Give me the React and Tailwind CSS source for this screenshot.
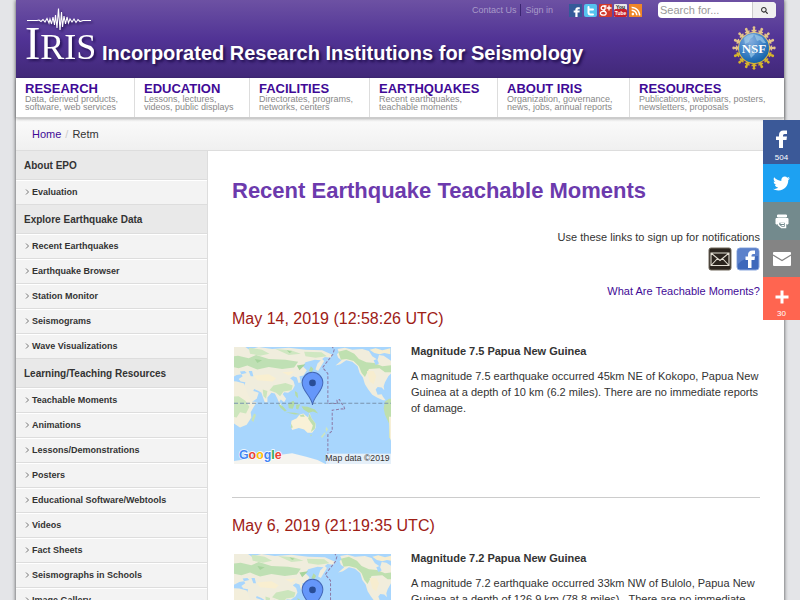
import React from 'react';
import { FaRss, FaSearch, FaTwitter } from 'react-icons/fa';

const navItems = [
  { title: 'RESEARCH', lines: ['Data, derived products,', 'software, web services'] },
  { title: 'EDUCATION', lines: ['Lessons, lectures,', 'videos, public displays'] },
  { title: 'FACILITIES', lines: ['Directorates, programs,', 'networks, centers'] },
  { title: 'EARTHQUAKES', lines: ['Recent earthquakes,', 'teachable moments'] },
  { title: 'ABOUT IRIS', lines: ['Organization, governance,', 'news, jobs, annual reports'] },
  { title: 'RESOURCES', lines: ['Publications, webinars, posters,', 'newsletters, proposals'] },
];

const sidebarSections = [
  { title: 'About EPO', links: ['Evaluation'] },
  {
    title: 'Explore Earthquake Data',
    links: ['Recent Earthquakes', 'Earthquake Browser', 'Station Monitor', 'Seismograms', 'Wave Visualizations'],
  },
  {
    title: 'Learning/Teaching Resources',
    links: [
      'Teachable Moments',
      'Animations',
      'Lessons/Demonstrations',
      'Posters',
      'Educational Software/Webtools',
      'Videos',
      'Fact Sheets',
      'Seismographs in Schools',
      'Image Gallery',
    ],
  },
];

const moments = [
  {
    date: 'May 14, 2019 (12:58:26 UTC)',
    title: 'Magnitude 7.5 Papua New Guinea',
    text: 'A magnitude 7.5 earthquake occurred 45km NE of Kokopo, Papua New Guinea at a depth of 10 km (6.2 miles). There are no immediate reports of damage.',
    shift: 0,
  },
  {
    date: 'May 6, 2019 (21:19:35 UTC)',
    title: 'Magnitude 7.2 Papua New Guinea',
    text: 'A magnitude 7.2 earthquake occurred 33km NW of Bulolo, Papua New Guinea at a depth of 126.9 km (78.8 miles).\u00a0 There are no immediate',
    shift: 8,
  },
];

const IrisLogo = () => (
  <svg width="76" height="62" viewBox="0 0 76 62" role="img" aria-label="IRIS" className="shrink-0 drop-shadow-[2px_2px_1px_rgba(20,5,60,0.6)]">
    <path
      d="M3 12.500H13L15 12L17 13.500L19 11.500L21 14L23 10.500L25 15L26 11L27.500 16L29 9L30.500 17L31.500 7L33 20L34.500 0.500L36 22L37.500 4L38.500 19L40 8L41.500 16L43 9L44.500 15L46 11L48 14L50 11L52 14.500L54 11.500L56 13.500L59 12.500H67"
      fill="none"
      stroke="#fff"
      strokeWidth="1.100"
    />
    <text x="1" y="51" fill="#fff" fontFamily="Liberation Serif, serif" fontSize="36">
      <tspan fontSize="46">I</tspan>RIS
    </text>
  </svg>
);

const FacebookMark = ({ size }) => (
  <svg width={size} height={size} viewBox="0 0 18 18" aria-hidden="true">
    <path d="M6 18V10H3V6.500H6V5Q6 0.500 10.500 0.500H14V4H11.500Q10 4 10 5.500V6.500H14L13.500 10H10V18Z" fill="currentColor" />
  </svg>
);

const YoutubeMark = () => (
  <svg width="13" height="13" viewBox="0 0 13 13" aria-hidden="true">
    <rect width="13" height="13" rx="1" fill="#e8e8e8" />
    <rect y="5" width="13" height="8" rx="1.500" fill="#c8202a" />
    <text x="6.500" y="5" textAnchor="middle" fill="#222" fontFamily="Liberation Sans, sans-serif" fontWeight="700" fontSize="5">You</text>
    <text x="6.500" y="11" textAnchor="middle" fill="#fff" fontFamily="Liberation Sans, sans-serif" fontWeight="700" fontSize="5">Tube</text>
  </svg>
);

const GoogleMark = () => (
  <svg width="13" height="13" viewBox="0 0 13 13" aria-hidden="true">
    <rect width="13" height="13" rx="1" fill="#d23a2c" />
    <circle cx="4.200" cy="4" r="2" fill="none" stroke="#fff" strokeWidth="1.300" />
    <ellipse cx="4.300" cy="9.300" rx="2.900" ry="1.900" fill="none" stroke="#fff" strokeWidth="1.300" />
    <path d="M4.500 6Q6 7 6.500 8.200M5 2H7.500M10 1.500V6.500M7.500 4H12.500" fill="none" stroke="#fff" strokeWidth="1.300" />
  </svg>
);

const NsfLogo = () => {
  const figures = Array.from({ length: 16 }, (_, i) => i * 22.5);

  return (
    <svg width="44" height="44" viewBox="0 0 44 44" role="img" aria-label="NSF">
      <defs>
        <radialGradient id="globe" cx="38%" cy="25%" r="80%">
          <stop offset="0" stopColor="#86aede" />
          <stop offset="0.550" stopColor="#3f83c8" />
          <stop offset="1" stopColor="#0f5fa4" />
        </radialGradient>
        <linearGradient id="gold" x1="0" y1="0" x2="0" y2="44" gradientUnits="userSpaceOnUse">
          <stop offset="0" stopColor="#e8cb9a" />
          <stop offset="1" stopColor="#d2ae22" />
        </linearGradient>
      </defs>
      {figures.map(angle => (
        <g key={angle} transform={`rotate(${angle} 22 22)`} fill={angle > 90 && angle < 270 ? '#d6b42c' : '#e4c58c'}>
          <circle cx="22" cy="1.700" r="1.400" />
          <path d="M21 2.500H23V3.800H24.500V5.200H23.200L24.800 8H19.200L20.800 5.200H19.500V3.800H21Z" />
        </g>
      ))}
      <circle cx="22" cy="22" r="15.200" fill="none" stroke="url(#gold)" strokeWidth="1.500" />
      <circle cx="22" cy="22" r="15" fill="url(#globe)" />
      <path d="M12 12Q16 8 22 8L21 11L18 13L17 16L13 18ZM22 8L30 11L34 17L31 17L28 14L25 15ZM17 18L24 20L23 28L19 32L16 25Z" fill="#a9d4ed" opacity="0.600" />
      <text x="22" y="26.500" textAnchor="middle" fill="#fff" stroke="#2f70b4" strokeWidth="0.500" paintOrder="stroke" fontFamily="Liberation Serif, serif" fontWeight="700" fontSize="13">NSF</text>
    </svg>
  );
};

const QuakeMap = ({ shift }) => (
  <svg width="157" height="117" viewBox="26 20 470 352" preserveAspectRatio="none" role="img" aria-label="Map of the epicenter" className="block">
    <rect x="26" y="20" width="470" height="352" fill="#a8d6fd" />
    <g transform={`translate(${shift} 0)`}>
      {/* Europe and Asia */}
      <path
        d="M10 20L60 20L72 28L100 20L140 26L190 22L240 28L290 30L322 44L314 52L298 50L290 56L296 62L278 92L270 88L276 70L286 60L268 58L240 66L232 78L244 90L234 106L222 108L226 126L219 128L214 112L203 108L194 114L204 122L208 136L202 148L188 158L176 156L172 162L182 176L176 186L166 178L162 184L172 202L166 200L156 176L148 160L138 158L126 172L126 186L118 186L108 158L100 152L86 146L84 152L100 158L94 176L78 186L68 168L56 140L60 126L46 124L40 116L52 108L48 102L34 104L20 112L10 112Z"
        fill="#f0eddd"
      />
      <path
        d="M10 50L38 46L70 54L92 44L130 56L180 58L218 64L206 82L170 86L130 80L96 88L66 76L40 84L10 78Z"
        fill="#bfe0b4"
      />
      <path d="M70 22L110 28L132 40L104 46L74 40ZM150 26L196 30L226 40L190 44ZM236 34L288 36L304 48L270 52L240 48Z" fill="#cfe7c1" />
      <path d="M144 136L180 128L202 136L198 150L174 154L164 168L152 158L132 150ZM112 148L126 152L122 176L114 168Z" fill="#cbe5bc" />
      <path d="M88 56L110 60L96 68ZM184 30L200 34L192 38ZM214 76L240 72L222 90Z" fill="#a6d49c" />
      <path d="M84 106L130 102L152 114L142 124L96 120ZM170 96L206 94L190 106Z" fill="#f9efd0" />
      <path d="M70 92L80 92L84 108L76 108ZM44 94L58 92L64 98L48 102Z" fill="#a8d6fd" />
      {/* Africa */}
      <path d="M10 122L34 124L56 130L66 158L78 184L94 186L84 202L76 216L78 232L64 254L44 262L26 250L10 226Z" fill="#f3eedb" />
      <path d="M10 170L40 168L60 182L72 200L62 220L44 216L34 232L10 228Z" fill="#cde6bd" />
      <path d="M86 220L92 224L84 246L78 240Z" fill="#c8e3b5" />
      {/* Japan, Philippines and Indonesia */}
      <path d="M256 78L264 86L258 96L250 92ZM252 98L254 114L242 126L230 132L228 126L242 118ZM208 152L216 158L218 174L210 166ZM158 190L172 198L184 212L178 214L164 202ZM188 190L204 182L208 190L202 206L190 204ZM212 194L224 192L218 208L212 206ZM180 216L208 218L226 222L208 223ZM228 198L246 200L268 208L278 220L262 214L250 218L234 208Z" fill="#b5dba5" />
      {/* Australia and New Zealand */}
      <path d="M198 242L214 234L222 224L234 220L240 226L248 232L252 218L258 234L270 250L270 264L260 278L246 278L236 268L220 264L200 270L196 258Z" fill="#f9f1d7" />
      <path d="M252 220L258 234L270 250L268 266L256 276L262 256L248 236ZM198 250L202 262L196 264ZM222 226L234 222L238 230L226 230ZM254 284L260 284L256 290Z" fill="#bfdfaf" />
      <path d="M302 260L308 268L302 276L300 268ZM298 276L300 280L290 294L286 290Z" fill="#cde5bf" />
      {/* Americas */}
      <path
        d="M336 26L358 22L380 28L410 26L430 32L440 48L456 58L460 44L474 46L500 64L500 96L488 108L478 126L474 138L476 150L468 142L456 140L450 148L456 164L468 162L472 170L480 180L472 180L454 172L440 164L428 148L418 132L412 112L402 98L396 78L380 64L362 60L344 72L330 76L348 60L338 52L334 42L340 36Z"
        fill="#f1eddc"
      />
      <path d="M338 34L362 28L386 40L400 56L422 66L446 68L470 78L500 74L500 96L478 96L462 84L430 86L418 110L408 98L400 78L384 62L362 56L346 58Z" fill="#bfe0b0" />
      <path d="M424 92L444 92L452 108L444 132L432 124ZM432 28L450 24L470 30L494 24L494 42L476 38L462 42L446 38Z" fill="#f7edcf" />
      <path d="M444 60L454 56L460 70L450 74Z" fill="#a8d6fd" />
      <path d="M478 184L490 176L500 176L500 304L490 292L490 250L478 224L474 204Z" fill="#bfdfac" />
      <path d="M490 230L500 230L500 312L492 292Z" fill="#f7efd6" />
      {/* Antarctica */}
      <path d="M10 366L70 356L126 352L166 344L200 340L242 350L276 360L300 372L10 372Z" fill="#f5f4ef" />
      <path
        d="M318 16L326 28L322 42L291 82L307 100V190L336 190L334 180L342 178L346 188L354 196L358 208L350 206L320 210V272L307 284V372"
        fill="none"
        stroke="#8c7aa6"
        strokeWidth="3"
        strokeDasharray="9 5"
      />
    </g>
    <path d="M26 189H496" stroke="#7994ae" strokeWidth="3" strokeDasharray="12 6" />
    <path d="M261 194C257 166 230 154 230 127A31 31 0 0 1 292 127C292 154 265 166 261 194Z" fill="#6597fa" stroke="#4467b5" strokeWidth="3" />
    <circle cx="261" cy="128" r="10" fill="#294d96" />
    <rect x="302" y="341" width="194" height="31" fill="#f1f5f8" opacity="0.850" />
    <text x="492" y="362" textAnchor="end" fill="#333" fontFamily="Liberation Sans, sans-serif" fontSize="26">Map data ©2019</text>
    <text x="41" y="358" fontFamily="Liberation Sans, sans-serif" fontWeight="700" fontSize="37" stroke="#fff" strokeWidth="4" paintOrder="stroke">
      <tspan fill="#4285f4">G</tspan>
      <tspan fill="#ea4335">o</tspan>
      <tspan fill="#fbbc05">o</tspan>
      <tspan fill="#4285f4">g</tspan>
      <tspan fill="#34a853">l</tspan>
      <tspan fill="#ea4335">e</tspan>
    </text>
  </svg>
);

const Header = () => (
  <header className="flex h-[78px] justify-between bg-linear-to-b from-[#6d51a3] via-[#513395] to-[#412878]">
    <div className="flex min-w-0 pt-2 pl-2">
      <IrisLogo />
      <div className="self-start pt-[31px] pl-0.5 text-[20px] leading-7 font-bold whitespace-nowrap text-white [text-shadow:2px_2px_3px_#1e0c4a]">
        Incorporated Research Institutions for Seismology
      </div>
    </div>
    <div className="-ml-32 flex shrink-0 flex-col items-end gap-2 pt-0.5 pr-2">
      <div className="flex items-start">
        <div className="flex pt-0.5 text-[9px] leading-3 text-[#a99bc9]">
          <a href="#contact" className="border-r border-[#3c2672] pr-1">Contact Us</a>
          <a href="#signin" className="pl-1">Sign in</a>
        </div>
        <div className="flex gap-0.5 pt-0.5 pr-4 pl-4">
          <a href="#facebook" aria-label="Facebook" className="flex size-[13px] items-end justify-end bg-[#345a99] text-white"><FacebookMark size={10} /></a>
          <a href="#twitter" aria-label="Twitter" className="flex size-[13px] items-center justify-center rounded-xs bg-[#55c3ee] text-white">
            <svg width="9" height="10" viewBox="0 0 9 10" aria-hidden="true">
              <path d="M2.500 1V6.500Q2.500 8.500 4.500 8.500H7M2.500 3.500H7" fill="none" stroke="currentColor" strokeWidth="2" strokeLinecap="round" />
            </svg>
          </a>
          <a href="#googleplus" aria-label="Google Plus"><GoogleMark /></a>
          <a href="#youtube" aria-label="YouTube"><YoutubeMark /></a>
          <a href="#rss" aria-label="RSS" className="flex size-[13px] items-center justify-center bg-[#f08627] text-white"><FaRss size={10} /></a>
        </div>
        <form className="flex h-4 w-[118px] overflow-hidden rounded-sm bg-white" onSubmit={e => e.preventDefault()}>
          <input type="text" aria-label="Search" placeholder="Search for..." className="min-w-0 flex-1 px-0.5 text-[11px] leading-4 text-gray-700 placeholder:text-[#999]" />
          <button type="submit" aria-label="Submit search" className="flex w-6 items-center justify-center border-l border-[#ccc] bg-[#f0f0f0] text-[#333]">
            <FaSearch size={7} />
          </button>
        </form>
      </div>
      <NsfLogo />
    </div>
  </header>
);

const MainNav = () => (
  <nav className="relative grid h-10 grid-cols-[119fr_115fr_120fr_128fr_132fr_154fr] border-b border-[#ccc] bg-white shadow-[0_1px_3px_rgba(0,0,0,0.3)]">
    {navItems.map(item => (
      <a key={item.title} href={`#${item.title.toLowerCase()}`} className="border-r border-[#ddd] pt-1 pl-[9px] whitespace-nowrap last:border-r-0">
        <span className="block text-[13px] leading-[13px] font-bold text-[#3f0a96]">{item.title}</span>
        {item.lines.map(line => (
          <span key={line} className="block text-[9px] leading-2 text-[#888]">{line}</span>
        ))}
      </a>
    ))}
  </nav>
);

const Sidebar = () => (
  <aside className="w-48 shrink-0 border-r border-[#ddd] bg-[#f3f3f3] text-[#333]">
    {sidebarSections.map(section => (
      <section key={section.title}>
        <h2 className="h-[29px] border-b border-[#ddd] bg-[#e9e9e9] pl-2 text-[10px] leading-[29px] font-bold">{section.title}</h2>
        <ul>
          {section.links.map(link => (
            <li key={link} className="h-[25px] border-t border-b border-t-white border-b-[#ddd]">
              <a href={`#${link.replace(/\W+/g, '-').toLowerCase()}`} className="flex items-center pl-2 text-[9px] leading-[23px] font-bold">
                <svg width="8" height="8" viewBox="0 0 8 8" aria-hidden="true">
                  <path d="M2 0.500L4.500 3L2 5.500" fill="none" stroke="#777" strokeWidth="1" />
                </svg>
                {link}
              </a>
            </li>
          ))}
        </ul>
      </section>
    ))}
  </aside>
);

const Moment = ({ moment }) => (
  <article className="mb-5 border-b border-[#ccc] pb-[33px] last:border-b-0">
    <h2 className="text-[16px] leading-4 text-[#9e2016]">{moment.date}</h2>
    <div className="flex pt-4">
      <div className="shrink-0 pt-1 pl-0.5"><QuakeMap shift={moment.shift} /></div>
      <div className="pl-5 text-[11px] leading-4 text-[#333]">
        <h3 className="mb-[9px] font-bold">{moment.title}</h3>
        <p>{moment.text}</p>
      </div>
    </div>
  </article>
);

const ShareBar = () => (
  <div className="fixed top-[120px] right-0 flex w-[37px] flex-col text-white">
    <button type="button" aria-label="Share to Facebook" className="flex h-11 flex-col items-center justify-end bg-[#3b5998]">
      <FacebookMark size={18} />
      <span className="pt-1 text-[8px] leading-3">504</span>
    </button>
    <button type="button" aria-label="Share to Twitter" className="flex h-[38px] items-center justify-center bg-[#1da1f2]">
      <FaTwitter size={17} />
    </button>
    <button type="button" aria-label="Print" className="flex h-[38px] items-center justify-center bg-[#738a8d]">
      <svg width="16" height="15" viewBox="0 0 16 15" aria-hidden="true">
        <path d="M3.500 1H12.500V3H3.500ZM2 4.500H14V10H12.500V7.500H3.500V10H2Z" fill="#fff" stroke="#fff" strokeWidth="1" strokeLinejoin="round" />
        <path d="M4.500 8H11.500V13.500H7.500L4.500 11Z" fill="none" stroke="#fff" strokeWidth="1.500" />
        <path d="M6.500 9.500H10M7.500 11.500H10" stroke="#fff" strokeWidth="1" />
      </svg>
    </button>
    <button type="button" aria-label="Share by email" className="flex h-[37px] items-center justify-center bg-[#848484]">
      <svg width="18" height="14" viewBox="0 0 18 14" aria-hidden="true">
        <rect width="18" height="14" rx="1" fill="#fff" />
        <path d="M0 3L9 8.500L18 3" fill="none" stroke="#848484" strokeWidth="1.200" />
      </svg>
    </button>
    <button type="button" aria-label="More sharing options" className="flex h-[43px] flex-col items-center justify-end bg-[#ff6550]">
      <svg width="14" height="14" viewBox="0 0 14 14" aria-hidden="true">
        <path d="M7 0.500V13.500M0.500 7H13.500" stroke="#fff" strokeWidth="3" />
      </svg>
      <span className="pt-1 text-[8px] leading-3">30</span>
    </button>
  </div>
);

const App = () => (
  <div className="min-h-screen bg-[#e4e5e8] px-4 font-['Liberation_Sans',Arial,sans-serif]">
    <div className="min-h-screen bg-white shadow-[0_0_4px_rgba(0,0,0,0.7)]">
      <Header />
      <MainNav />
      <div className="flex h-[33px] items-center gap-1 border-b border-[#ddd] bg-linear-to-b from-[#fbfbfb] to-[#f0f0f0] px-4 text-[11px] text-[#333]">
        <a href="#home" className="text-[#3f0a96]">Home</a>
        <span className="text-[#ccc]">/</span>
        <span>Retm</span>
      </div>
      <div className="flex">
        <Sidebar />
        <main className="min-w-0 flex-1 pt-6 pr-6 pl-6">
          <h1 className="text-[22px] leading-8 font-bold text-[#6c3aad]">Recent Earthquake Teachable Moments</h1>
          <div className="flex flex-col items-end pt-[22px] text-[11px] leading-4 text-[#333]">
            <p>Use these links to sign up for notifications</p>
            <div className="flex gap-1 pt-0.5 pb-3">
              <a href="#email" aria-label="Email notifications">
                <svg width="24" height="24" viewBox="0 0 24 24" aria-hidden="true">
                  <rect x="1" y="1" width="22" height="22" rx="2" fill="#2b241e" stroke="#70685c" />
                  <path d="M3 6H21V18.500H3ZM3 6L12 13.500L21 6M3 18.500L9.500 11.500M21 18.500L14.500 11.500" fill="none" stroke="#e4dfd4" strokeWidth="1.100" />
                </svg>
              </a>
              <a href="#facebook-page" aria-label="Facebook page">
                <svg width="24" height="24" viewBox="0 0 24 24" aria-hidden="true">
                  <rect x="1" y="1" width="22" height="22" rx="3" fill="#3e68bb" stroke="#8ca8de" />
                  <path d="M2 2H22V9Q10 9 2 17Z" fill="#7293d5" opacity="0.600" />
                  <path d="M12 21V13H9.500V9.500H12V8Q12 3.500 16.500 3.500H19V7H17Q15.500 7 15.500 8.500V9.500H19L18.500 13H15.500V21Z" fill="#fff" />
                </svg>
              </a>
            </div>
            <a href="#what" className="text-[#3f0a96]">What Are Teachable Moments?</a>
          </div>
          <div className="pt-3">
            {moments.map(moment => (
              <Moment key={moment.date} moment={moment} />
            ))}
          </div>
        </main>
      </div>
    </div>
    <ShareBar />
  </div>
);

export default App;
